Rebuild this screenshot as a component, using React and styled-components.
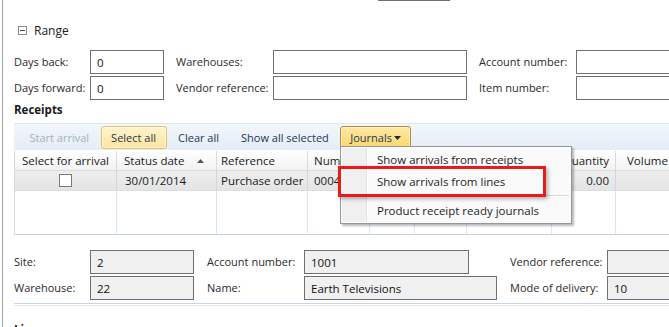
import React from "react";
import styled, { createGlobalStyle } from "styled-components";

const Global = createGlobalStyle`
  html, body { margin: 0; padding: 0; background: #fff; }
  * { box-sizing: border-box; }
`;

const Page = styled.div`
  position: relative;
  width: 669px;
  height: 327px;
  overflow: hidden;
  background: #fff;
  font-family: "Open Sans", "Noto Sans", sans-serif;
  font-size: 11px;
  color: #222;
`;

const Frame = styled.div`
  margin-left: 2px;
  height: 100%;
  border-left: 1px solid #a3a3a3;
  padding-left: 11px;
  width: 800px;
`;

const TopStub = styled.div`
  margin-left: 364px;
  width: 72px;
  height: 1px;
  background: #6e6e6e;
`;

const SectionHeader = styled.div`
  margin-top: 21px;
  height: 16px;
  display: flex;
  align-items: center;
  gap: 7px;
  padding-left: 4px;
  font-size: 12px;
`;

const CollapseBox = styled.span`
  width: 9px;
  height: 9px;
  border: 1px solid #8a8a8a;
  position: relative;
  display: inline-block;
  &::after {
    content: "";
    position: absolute;
    left: 1px;
    right: 1px;
    top: 3px;
    height: 1px;
    background: #444;
  }
`;

const FieldGrid = styled.div`
  display: grid;
  grid-template-columns: ${(p) => p.$cols};
  grid-auto-rows: 24px;
  row-gap: 2px;
  margin-top: ${(p) => p.$top}px;
  align-items: center;
`;

const Label = styled.span`
  white-space: nowrap;
  color: #2a2a2a;
  margin-top: -2px;
`;

const Input = styled.div`
  width: ${(p) => p.$w}px;
  height: 24px;
  border: 1px solid #707070;
  background: ${(p) => (p.$ro ? "#f0f0f0" : "#fff")};
  padding: 0 6px;
  display: flex;
  align-items: center;
  color: #111;
  font-size: 11.5px;
`;

const Heading = styled.div`
  margin-top: 2px;
  height: 16px;
  line-height: 16px;
  font-weight: 700;
  font-size: 11.5px;
  color: #1a1a1a;
`;

const Toolbar = styled.div`
  margin-top: 5px;
  height: 27px;
  display: flex;
  align-items: center;
  gap: 1px;
  padding-left: 5px;
  border-top: 1px solid #dfe7f0;
  background: linear-gradient(#f3f7fb, #e3ecf6);
`;

const ToolButton = styled.div`
  height: 23px;
  padding: 0 ${(p) => (p.$pad ? p.$pad : 9.5)}px;
  display: flex;
  align-items: center;
  gap: 2px;
  border-radius: 3px;
  white-space: nowrap;
  color: ${(p) => (p.$disabled ? "#a9b0b8" : "#1e3656")};
  border: 1px solid
    ${(p) => (p.$active ? "#b88b34" : p.$hover ? "#e2c26d" : "transparent")};
  background: ${(p) =>
    p.$active
      ? "linear-gradient(#fde9a4, #fbd66e)"
      : p.$hover
      ? "linear-gradient(#fff4cf, #fde59c)"
      : "transparent"};
  box-shadow: ${(p) =>
    p.$active || p.$hover ? "inset 0 0 0 1px rgba(255,255,255,0.5)" : "none"};
`;

const Caret = styled.svg`
  width: 7px;
  height: 4px;
  margin-top: 1px;
`;

const Grid = styled.div`
  margin-top: 1px;
  height: 84px;
  border-left: 1px solid #cfdae6;
  border-bottom: 1px solid #c3d3e4;
  display: grid;
  grid-template-columns: 102px 100px 91px 62px 45px 52px 85px 64px 120px;
  grid-template-rows: 20px 20px 1fr;
`;

const HeadCell = styled.div`
  height: 20px;
  display: flex;
  align-items: center;
  justify-content: ${(p) => (p.$right ? "flex-end" : "flex-start")};
  padding: 0 6px 0 ${(p) => p.$pl ?? 7}px;
  gap: 0;
  white-space: nowrap;
  overflow: hidden;
  background: linear-gradient(#ffffff, #f2f2f2);
  border-right: 1px solid #dadada;
  border-bottom: 1px solid #dcdcdc;
  color: #1a1a1a;
  font-size: 11.5px;
`;

const SortArrow = styled.svg`
  width: 7px;
  height: 4px;
  margin-left: auto;
  margin-right: 6px;
`;

const Cell = styled.div`
  height: 20px;
  display: flex;
  align-items: center;
  justify-content: ${(p) =>
    p.$center ? "center" : p.$right ? "flex-end" : "flex-start"};
  padding: 0 6px 0 ${(p) => p.$pl ?? 8}px;
  white-space: nowrap;
  overflow: hidden;
  background: linear-gradient(#eeeeee, #e4e4e4);
  border-right: 1px solid ${(p) => (p.$last ? "transparent" : "#d6d6d6")};
  border-bottom: 1px solid #dedede;
  color: #1a1a1a;
  font-size: 11.5px;
`;

const EmptyCell = styled.div`
  border-right: 1px solid #dde6f0;
`;

const Check = styled.span`
  width: 13px;
  height: 13px;
  border: 1px solid #7a7a7a;
  background: #fff;
  display: inline-block;
`;

const Menu = styled.div`
  position: absolute;
  left: 340px;
  top: 146px;
  width: 232px;
  height: 78px;
  background: #fafafa;
  border: 1px solid #979797;
  box-shadow: 2px 2px 2px rgba(0, 0, 0, 0.28);
  padding: 2px;
  display: flex;
  flex-direction: column;
  &::before {
    content: "";
    position: absolute;
    left: 1px;
    top: 1px;
    bottom: 1px;
    width: 24px;
    background: #f0f0f0;
    border-right: 1px solid #e2e3e3;
    box-shadow: 1px 0 0 #fff;
  }
`;

const MenuItem = styled.div`
  position: relative;
  height: 22px;
  display: flex;
  align-items: center;
  padding-left: 34px;
  color: #1e1e1e;
  font-size: 11.5px;
  white-space: nowrap;
`;

const MenuSeparator = styled.div`
  position: relative;
  height: 7px;
  margin-left: 34px;
  display: flex;
  align-items: center;
  &::after {
    content: "";
    flex: 1;
    height: 1px;
    background: #d6d6d6;
    box-shadow: 0 1px 0 #fff;
  }
`;

const Highlight = styled.div`
  position: absolute;
  left: 338px;
  top: 166px;
  width: 208px;
  height: 31px;
  border: 3px solid #e61b1b;
  box-shadow: 2px 2px 4px rgba(0, 0, 0, 0.3);
`;

const Separator = styled.div`
  margin-top: 3px;
  height: 3px;
  border-top: 1px solid #c6d4e4;
  border-bottom: 1px solid #e0e7ef;
`;

const Bottom = styled.div`
  margin-top: 15px;
`;

const NextHeading = styled(Heading)`
  margin-top: 16px;
`;

export default function App() {
  return (
    <Page>
      <Global />
      <Frame>
        <TopStub />
        <SectionHeader>
          <CollapseBox />
          <span>Range</span>
        </SectionHeader>
        <FieldGrid $top={12} $cols="76px 86px 97px 206px 97px 200px">
          <Label>Days back:</Label>
          <Input $w={74}>0</Input>
          <Label>Warehouses:</Label>
          <Input $w={194} />
          <Label>Account number:</Label>
          <Input $w={140} />
          <Label>Days forward:</Label>
          <Input $w={74}>0</Input>
          <Label>Vendor reference:</Label>
          <Input $w={194} />
          <Label>Item number:</Label>
          <Input $w={140} />
        </FieldGrid>
        <Heading>Receipts</Heading>
        <Toolbar>
          <ToolButton $disabled>Start arrival</ToolButton>
          <ToolButton $hover>Select all</ToolButton>
          <ToolButton>Clear all</ToolButton>
          <ToolButton>Show all selected</ToolButton>
          <ToolButton $active $pad={9}>
            Journals
            <Caret viewBox="0 0 7 4">
              <path d="M0 0h7L3.5 4z" fill="#1e2a3a" />
            </Caret>
          </ToolButton>
        </Toolbar>
        <Grid>
          <HeadCell>Select for arrival</HeadCell>
          <HeadCell>
            Status date
            <SortArrow viewBox="0 0 7 4">
              <path d="M0 4h7L3.5 0z" fill="#555" />
            </SortArrow>
          </HeadCell>
          <HeadCell $pl={4}>Reference</HeadCell>
          <HeadCell $pl={6}>Number</HeadCell>
          <HeadCell />
          <HeadCell />
          <HeadCell />
          <HeadCell $right>Quantity</HeadCell>
          <HeadCell $pl={11}>Volume</HeadCell>

          <Cell $center $pl={6}>
            <Check />
          </Cell>
          <Cell>30/01/2014</Cell>
          <Cell $pl={4}>Purchase order</Cell>
          <Cell $pl={6}>000420</Cell>
          <Cell />
          <Cell />
          <Cell />
          <Cell $right>0.00</Cell>
          <Cell $right $last>0.00</Cell>

          <EmptyCell />
          <EmptyCell />
          <EmptyCell />
          <EmptyCell />
          <EmptyCell />
          <EmptyCell />
          <EmptyCell />
          <EmptyCell />
          <EmptyCell />
        </Grid>
        <Bottom>
          <FieldGrid $top={0} $cols="76px 117px 97px 206px 97px 200px">
            <Label>Site:</Label>
            <Input $w={104} $ro>2</Input>
            <Label>Account number:</Label>
            <Input $w={165} $ro>1001</Input>
            <Label>Vendor reference:</Label>
            <Input $w={140} $ro />
            <Label>Warehouse:</Label>
            <Input $w={104} $ro>22</Input>
            <Label>Name:</Label>
            <Input $w={193} $ro>Earth Televisions</Input>
            <Label>Mode of delivery:</Label>
            <Input $w={140} $ro>10</Input>
          </FieldGrid>
        </Bottom>
        <Separator />
        <NextHeading>Lines</NextHeading>
      </Frame>
      <Menu>
        <MenuItem>Show arrivals from receipts</MenuItem>
        <MenuItem>Show arrivals from lines</MenuItem>
        <MenuSeparator />
        <MenuItem>Product receipt ready journals</MenuItem>
      </Menu>
      <Highlight />
    </Page>
  );
}
